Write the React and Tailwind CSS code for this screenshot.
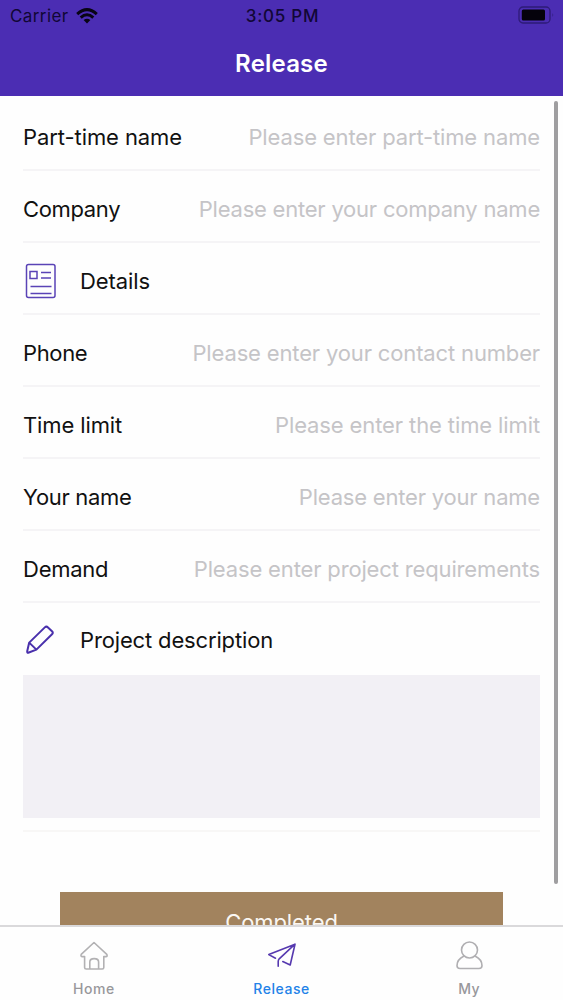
import React from 'react';

function Field({ label, hint, labelClass, hintClass }) {
  return (
    <div className="flex h-[72px] items-center justify-between border-b-2 border-[#f5f4f6] pt-[6px] leading-[30px]">
      <span className={`whitespace-nowrap text-[#111] ${labelClass}`}>{label}</span>
      <span className={`whitespace-nowrap text-[#c5c4c7] ${hintClass}`}>{hint}</span>
    </div>
  );
}

function Tab({ label, active, children }) {
  return (
    <div className="flex flex-1 flex-col items-center pt-[11px]">
      <svg width="36" height="36" viewBox="0 0 36 36" fill="none" strokeLinejoin="round" strokeLinecap="round">{children}</svg>
      <span className={`mt-[6px] text-[14px] leading-[18px] font-medium tracking-[0.55px] ${active ? 'text-[#2382e8]' : 'text-[#98979b]'}`}>{label}</span>
    </div>
  );
}

export default function App() {
  return (
    <div className="relative flex h-[1000px] w-[563px] flex-col overflow-hidden bg-[#fefefe] font-['Inter',sans-serif]">
      <header className="h-[96px] shrink-0 bg-[#4b2db3]">
        <div className="grid h-[32px] grid-cols-3 items-center pl-[10px] pr-[8px] text-[17px] leading-[22px] text-[#110735]">
          <div className="flex items-center gap-[7px]">
            <span className="tracking-[0.4px]">Carrier</span>
            <svg className="-mt-px" width="22" height="16" viewBox="0 0 22 16" fill="none" stroke="#080414" strokeWidth="3">
              <path d="M1.2 6.2Q11-3 20.8 6.2M4.7 9.6Q11 3.8 17.3 9.6" />
              <path d="M11 15.5 7.6 12.1Q11 9.2 14.4 12.1Z" fill="#080414" stroke="none" />
            </svg>
          </div>
          <span className="text-center text-[17px] font-medium tracking-[0.75px]">3:05 PM</span>
          <svg className="ml-auto -mt-[3px]" width="37" height="18" viewBox="0 0 37 18">
            <rect x="1" y="1" width="31" height="16" rx="4" fill="none" stroke="#2e1b78" strokeWidth="1.3" />
            <rect x="3.8" y="3.5" width="23.2" height="11" rx="1.5" fill="#05020c" />
            <path d="M34.5 7q1.5 2 0 4z" fill="#2e1b78" />
          </svg>
        </div>
        <h1 className="pt-[17px] text-center text-[24px] leading-[30px] font-semibold tracking-[0.2px] text-white">Release</h1>
      </header>

      <main className="min-h-0 flex-1 overflow-hidden px-[23px] pt-[3px] text-[22px]">
        <Field label="Part-time name" hint="Please enter part-time name" labelClass="tracking-[-0.08px]" hintClass="tracking-[-0.14px]" />
        <Field label="Company" hint="Please enter your company name" labelClass="tracking-[-0.35px]" hintClass="tracking-[-0.22px]" />
        <div className="flex h-[72px] items-center border-b-2 border-[#f5f4f6] pt-[6px] text-[#111]">
          <svg width="57" height="38" viewBox="0 0 57 38" fill="none" stroke="#5a43b6" strokeWidth="1.5">
            <rect x="3.5" y="2.5" width="28.5" height="33" rx="2" />
            <path d="M7 9.5h7v7H7zM18 10.5h10M18 16h10M7.5 24.5h21M7.5 31.5h21" />
          </svg>
          <span className="leading-[30px] tracking-[-0.1px]">Details</span>
        </div>
        <Field label="Phone" hint="Please enter your contact number" labelClass="tracking-[-0.35px]" hintClass="tracking-[-0.15px]" />
        <Field label="Time limit" hint="Please enter the time limit" labelClass="tracking-[-0.12px]" hintClass="tracking-[-0.11px]" />
        <Field label="Your name" hint="Please enter your name" labelClass="tracking-[-0.33px]" hintClass="tracking-[-0.2px]" />
        <Field label="Demand" hint="Please enter project requirements" labelClass="tracking-[-0.25px]" hintClass="tracking-[-0.15px]" />
        <div className="flex h-[72px] items-center pt-[2px] text-[#111]">
          <svg className="-mt-[2px]" width="57" height="38" viewBox="0 0 57 38" fill="none" stroke="#4930ac" strokeWidth="2" strokeLinejoin="round">
            <path d="M5.2 32.8Q4 32.8 4.2 31.2L6.2 22.6 21.8 7.4q1.6-1.5 3.2 0l4 3.8q1.6 1.5 0 3L13.4 29.6ZM6.2 22.6l7.2 7" />
          </svg>
          <span className="leading-[30px] tracking-[-0.15px]">Project description</span>
        </div>
        <div className="h-[143px] bg-[#f2f0f5]" />
        <div className="mt-[12px] h-[2px] bg-[#f8f7f6]" />
        <button className="mx-[37px] mt-[60px] block h-[60px] w-[443px] bg-[#a2835e] text-center text-[22px] leading-[58px] tracking-[-0.1px] text-[#faf7f3]">Completed</button>
      </main>

      <nav className="flex h-[75px] shrink-0 border-t-2 border-[#dad9db] bg-[#fefefe]">
        <Tab label="Home">
          <path d="M18 4.5 5.2 16.4Q4.4 18.6 6.5 18.6H8.6V29.4Q8.6 31 10.2 31H26.2Q27.8 31 27.8 29.4V18.6H29.8Q31.8 18.6 30.8 16.4ZM13.8 31V24Q13.8 20.6 18.2 20.6 22.6 20.6 22.6 24V31" stroke="#b2b1b3" strokeWidth="1.6" />
        </Tab>
        <Tab label="Release" active>
          <path d="M11.5 20.2 4.8 16.6 31 6.2 26.2 27 18.8 23.6M31 6.2 15.2 20.8Q14.2 21.8 14.2 23.6V28.2" stroke="#5639af" strokeWidth="1.6" />
        </Tab>
        <Tab label="My">
          <g stroke="#b0afb2" strokeWidth="1.6"><circle cx="18.5" cy="12" r="8" /><path d="M12.6 18.2Q6 21.4 6 27.5q0 3 3 3h19q3 0 3-3 0-6.1-6.6-9.3" /></g>
        </Tab>
      </nav>
      <div className="absolute left-[554px] top-[101px] h-[783px] w-[4px] rounded-full bg-[#9f9ea0]" />
    </div>
  );
}
